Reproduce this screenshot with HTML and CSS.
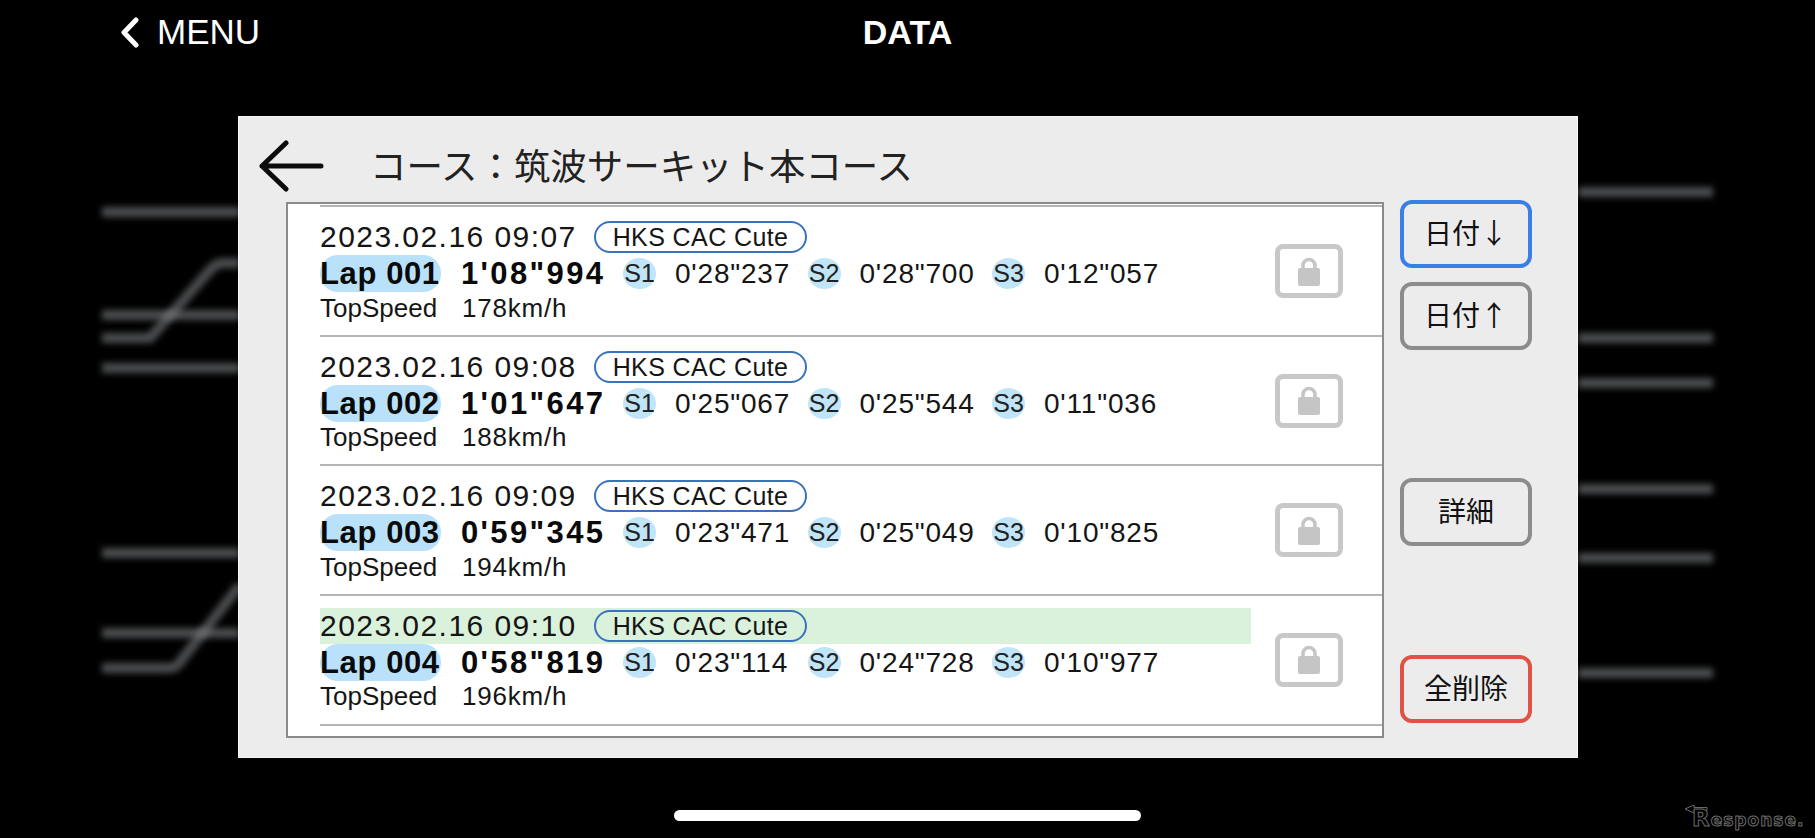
FILE: index.html
```html
<!DOCTYPE html>
<html lang="ja">
<head>
<meta charset="utf-8">
<title>DATA</title>
<link rel="stylesheet" href="styles.css">
</head>
<body>
<svg class="backdrop" viewBox="0 0 1815 838" width="1815" height="838" aria-hidden="true">
  <g class="tracks">
    <path d="M102 212H240"/>
    <path d="M102 315H240"/>
    <path d="M102 338H150L210 270Q216 263 224 263H240"/>
    <path d="M102 368H240"/>
    <path d="M102 553H240"/>
    <path d="M102 633H240"/>
    <path d="M102 668H170Q176 668 180 662L240 585"/>
    <path d="M1578 192H1713"/>
    <path d="M1578 338H1713"/>
    <path d="M1578 383H1713"/>
    <path d="M1578 489H1713"/>
    <path d="M1578 558H1713"/>
    <path d="M1578 673H1713"/>
  </g>
</svg>

<header class="topbar">
  <div class="nav-back">
    <svg class="chevron" viewBox="0 0 19 31" width="19" height="31"><path d="M16 3L4 15.5L16 28"/></svg>
    <span>MENU</span>
  </div>
  <div class="nav-title">DATA</div>
  <div></div>
</header>

<main class="panel">
  <div class="panel-head">
    <svg class="back-arrow" viewBox="0 0 65 52" width="65" height="52"><path d="M27 3L3 26L27 49M3 26H62"/></svg>
    <h1 class="course">コース：筑波サーキット本コース</h1>
  </div>
  <div class="panel-body">
    <section class="list">
      <article class="row">
        <div class="info">
          <div class="line-date"><span class="date">2023.02.16 09:07</span><span class="tag">HKS CAC Cute</span></div>
          <div class="line-lap"><span class="lap">Lap 001</span><span class="time">1'08"994</span><span class="sec">S1</span><span class="val">0'28"237</span><span class="sec">S2</span><span class="val">0'28"700</span><span class="sec">S3</span><span class="val">0'12"057</span></div>
          <div class="line-speed"><span class="speed-label">TopSpeed</span><span class="speed">178km/h</span></div>
        </div>
        <div class="lock"><svg viewBox="0 0 22 29" width="22" height="29"><path class="shackle" d="M5 13V8.500a6 6 0 0 1 12 0V13"/><rect class="lock-body" x="0" y="11" width="22" height="18" rx="2"/></svg></div>
      </article>
      <article class="row">
        <div class="info">
          <div class="line-date"><span class="date">2023.02.16 09:08</span><span class="tag">HKS CAC Cute</span></div>
          <div class="line-lap"><span class="lap">Lap 002</span><span class="time">1'01"647</span><span class="sec">S1</span><span class="val">0'25"067</span><span class="sec">S2</span><span class="val">0'25"544</span><span class="sec">S3</span><span class="val">0'11"036</span></div>
          <div class="line-speed"><span class="speed-label">TopSpeed</span><span class="speed">188km/h</span></div>
        </div>
        <div class="lock"><svg viewBox="0 0 22 29" width="22" height="29"><path class="shackle" d="M5 13V8.500a6 6 0 0 1 12 0V13"/><rect class="lock-body" x="0" y="11" width="22" height="18" rx="2"/></svg></div>
      </article>
      <article class="row">
        <div class="info">
          <div class="line-date"><span class="date">2023.02.16 09:09</span><span class="tag">HKS CAC Cute</span></div>
          <div class="line-lap"><span class="lap">Lap 003</span><span class="time">0'59"345</span><span class="sec">S1</span><span class="val">0'23"471</span><span class="sec">S2</span><span class="val">0'25"049</span><span class="sec">S3</span><span class="val">0'10"825</span></div>
          <div class="line-speed"><span class="speed-label">TopSpeed</span><span class="speed">194km/h</span></div>
        </div>
        <div class="lock"><svg viewBox="0 0 22 29" width="22" height="29"><path class="shackle" d="M5 13V8.500a6 6 0 0 1 12 0V13"/><rect class="lock-body" x="0" y="11" width="22" height="18" rx="2"/></svg></div>
      </article>
      <article class="row">
        <div class="info">
          <div class="line-date best"><span class="date">2023.02.16 09:10</span><span class="tag">HKS CAC Cute</span></div>
          <div class="line-lap"><span class="lap">Lap 004</span><span class="time">0'58"819</span><span class="sec">S1</span><span class="val">0'23"114</span><span class="sec">S2</span><span class="val">0'24"728</span><span class="sec">S3</span><span class="val">0'10"977</span></div>
          <div class="line-speed"><span class="speed-label">TopSpeed</span><span class="speed">196km/h</span></div>
        </div>
        <div class="lock"><svg viewBox="0 0 22 29" width="22" height="29"><path class="shackle" d="M5 13V8.500a6 6 0 0 1 12 0V13"/><rect class="lock-body" x="0" y="11" width="22" height="18" rx="2"/></svg></div>
      </article>
    </section>
    <aside class="actions">
      <button class="btn btn-blue">日付↓</button>
      <button class="btn btn-gray btn-second">日付↑</button>
      <button class="btn btn-gray btn-detail">詳細</button>
      <button class="btn btn-red btn-delete">全削除</button>
    </aside>
  </div>
</main>

<div class="home-row"><div class="home-bar"></div></div>

<div class="watermark">
  <svg class="wm-arrow" viewBox="0 0 24 14" width="24" height="14"><path d="M1 5L10 1V3.500H23V6.500H10V9Z"/></svg>
  <span class="wm-text"><span class="wm-r">R</span>esponse.</span>
</div>
</body>
</html>
```

FILE: styles.css
```css
* { box-sizing: border-box; margin: 0; padding: 0; }

html, body {
  width: 1815px;
  height: 838px;
  overflow: hidden;
  background: #000;
}

body {
  position: relative;
  font-family: "Liberation Sans", Arial, "Noto Sans CJK JP", sans-serif;
  color: #111;
}

.backdrop {
  position: absolute;
  left: 0;
  top: 0;
}

.tracks path {
  fill: none;
  stroke: #7f8387;
  stroke-opacity: 0.58;
  stroke-width: 10;
  filter: blur(3px);
}

/* top bar */
.topbar {
  position: relative;
  height: 116px;
  padding-left: 120px;
  display: grid;
  grid-template-columns: 1fr auto 1fr;
  align-items: start;
  color: #fff;
  margin-right: 120px;
}

.nav-back {
  height: 64px;
  display: flex;
  align-items: center;
  gap: 18px;
  font-size: 35px;
}

.chevron path {
  fill: none;
  stroke: #fff;
  stroke-width: 5;
  stroke-linecap: round;
  stroke-linejoin: round;
}

.nav-title {
  height: 64px;
  line-height: 64px;
  font-size: 34px;
  font-weight: 700;
}

/* panel */
.panel {
  position: relative;
  width: 1340px;
  height: 642px;
  margin-left: 238px;
  background: #ececec;
  border: 1px solid #f6f6f6;
}

.panel-head {
  height: 83px;
  padding: 14px 0 0 20px;
  display: flex;
  align-items: center;
  gap: 46px;
}

.back-arrow path {
  fill: none;
  stroke: #0c0c0c;
  stroke-width: 5;
  stroke-linecap: round;
  stroke-linejoin: round;
}

.course {
  font-family: "Noto Sans CJK JP", sans-serif;
  font-size: 36.45px;
  font-weight: 400;
  line-height: 44px;
  margin-bottom: 4px;
  color: #222;
}

.panel-body {
  display: flex;
  padding-left: 47px;
  height: 538px;
}

/* list */
.list {
  width: 1098px;
  height: 536px;
  margin-top: 2px;
  background: #fff;
  border: 2px solid #8b8b8b;
  padding-top: 1px;
  padding-left: 32px;
}

.list::before {
  content: "";
  display: block;
  height: 2px;
  background: #b5b5b5;
}

.row {
  height: 129.67px;
  display: flex;
  border-bottom: 2px solid #b5b5b5;
  padding-top: 12px;
}

.info {
  width: 931px;
}

.line-date {
  height: 36px;
  display: flex;
  align-items: center;
}

.best {
  background: #daf2dc;
}

.date {
  width: 274px;
  font-size: 30px;
  line-height: 38px;
  letter-spacing: 1.45px;
  color: #151515;
}

.tag {
  width: 213px;
  height: 32px;
  border: 2px solid #3a72bd;
  border-radius: 16px;
  font-size: 25px;
  line-height: 29px;
  letter-spacing: 0.4px;
  text-align: center;
  color: #151515;
}

.line-lap {
  height: 37px;
  display: flex;
  align-items: center;
  gap: 19px;
}

.lap {
  width: 121px;
  height: 37px;
  line-height: 37px;
  border-radius: 18px;
  background: #b9e2fa;
  font-size: 31px;
  font-weight: 700;
  letter-spacing: 0.6px;
  white-space: nowrap;
  color: #0a0a0a;
}

.time {
  width: 144px;
  padding-top: 1px;
  padding-left: 1px;
  font-size: 31px;
  font-weight: 700;
  letter-spacing: 2.35px;
  white-space: nowrap;
  color: #0a0a0a;
}

.sec {
  width: 33px;
  height: 31px;
  line-height: 31px;
  border-radius: 50%;
  background: #c0e5f8;
  font-size: 25px;
  text-align: center;
  color: #222;
}

.val {
  width: 113.5px;
  padding-top: 1px;
  font-size: 28px;
  letter-spacing: 0.8px;
  white-space: nowrap;
  color: #151515;
}

.line-speed {
  height: 32px;
  display: flex;
  align-items: center;
  font-size: 26px;
  color: #151515;
}

.speed-label {
  width: 142px;
}

.speed {
  letter-spacing: 0.8px;
}

/* lock buttons */
.lock {
  width: 68px;
  height: 54px;
  margin: 25px 0 0 24px;
  border: 5px solid #c8c8c8;
  border-radius: 8px;
  background: #fff;
  display: flex;
  align-items: center;
  justify-content: center;
}

.shackle {
  fill: none;
  stroke: #c5c5c5;
  stroke-width: 3.5;
}

.lock-body {
  fill: #c5c5c5;
}

/* side buttons */
.actions {
  width: 132px;
  height: 523px;
  margin-left: 16px;
  display: flex;
  flex-direction: column;
}

.btn {
  height: 68px;
  flex: none;
  padding-bottom: 4px;
  background: #ececec;
  border: 4px solid #8c8c8c;
  border-radius: 12px;
  font-family: "Noto Sans CJK JP", sans-serif;
  font-size: 28px;
  color: #111;
}

.btn-blue { border-color: #3a7fe6; }
.btn-red { border-color: #dd5444; }
.btn-second { margin-top: 14px; }
.btn-detail { margin-top: 128px; }
.btn-delete { margin-top: auto; }

/* home indicator */
.home-row {
  position: relative;
  margin-top: 52px;
  display: flex;
  justify-content: center;
}

.home-bar {
  width: 467px;
  height: 11px;
  border-radius: 6px;
  background: #fff;
}

/* watermark */
.watermark {
  position: absolute;
  left: 1684px;
  top: 800px;
  width: 124px;
  height: 32px;
}

.wm-arrow {
  position: absolute;
  left: 0;
  top: 4px;
}

.wm-arrow path {
  fill: #000;
  stroke: #6a6a6a;
  stroke-width: 1;
}

.wm-text {
  position: absolute;
  left: 8px;
  top: 6px;
  font-family: "DejaVu Sans", sans-serif;
  font-size: 17px;
  font-weight: 700;
  line-height: 24px;
  letter-spacing: 1px;
  color: #000;
  -webkit-text-stroke: 1px #6a6a6a;
  white-space: nowrap;
}

.wm-r {
  font-size: 23px;
}
```
